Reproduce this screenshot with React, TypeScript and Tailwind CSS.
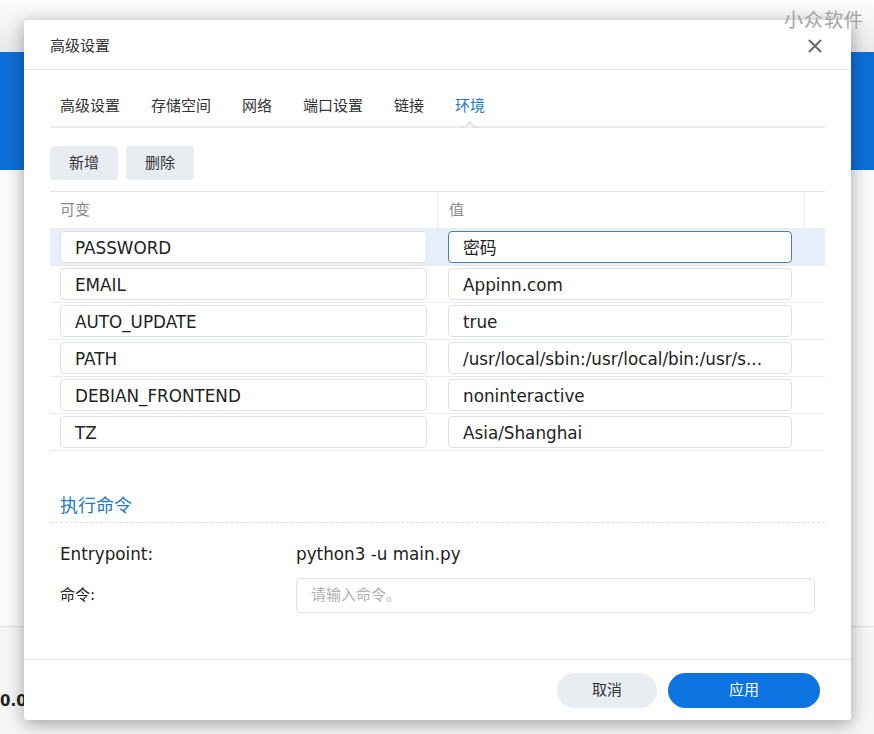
import React from 'react';

const font = { fontFamily: '"DejaVu Sans", "Noto Sans CJK SC", sans-serif' };

const tabs = ['高级设置', '存储空间', '网络', '端口设置', '链接', '环境'];

const envRows = [
  { name: 'PASSWORD', value: '密码' },
  { name: 'EMAIL', value: 'Appinn.com' },
  { name: 'AUTO_UPDATE', value: 'true' },
  { name: 'PATH', value: '/usr/local/sbin:/usr/local/bin:/usr/s...' },
  { name: 'DEBIAN_FRONTEND', value: 'noninteractive' },
  { name: 'TZ', value: 'Asia/Shanghai' },
];

const CloseIcon = () => (
  <svg width="14" height="14" viewBox="0 0 14 14" fill="none">
    <path d="M1.5 1.5L12.5 12.5M12.5 1.5L1.5 12.5" stroke="#6b6b6b" strokeWidth="2" strokeLinecap="round" />
  </svg>
);

const App: React.FC = () => {
  return (
    <div className="relative w-[874px] h-[734px] overflow-hidden bg-[#f9f9f9]" style={font}>
      {/* page behind the dialog */}
      <div className="flex flex-col h-full">
        <div className="h-[52px] bg-gradient-to-b from-[#fdfdfd] to-[#e9e9e9]" />
        <div className="h-[118px] bg-[#0e6fd8]" />
        <div className="h-[457px] bg-[#fafafa] border-b border-[#dedede]" />
        <div className="h-[107px] bg-[#f6f6f6] pt-[62px]">
          <span className="text-[15px] leading-[18px] font-bold text-[#222]">0.0</span>
        </div>
      </div>

      {/* dialog */}
      <div className="absolute left-[24px] top-[20px] w-[827px] h-[700px] bg-white rounded-[3px] shadow-[0_4px_18px_rgba(0,0,0,0.35)] flex flex-col">
        {/* header */}
        <div className="h-[50px] shrink-0 flex items-center justify-between pl-[26px] pr-[29px] pt-[3px] border-b border-[#e6e6e6]">
          <span className="text-[15px] text-[#333]">高级设置</span>
          <CloseIcon />
        </div>

        {/* body */}
        <div className="flex-1 flex flex-col px-[26px]">
          {/* tabs */}
          <div className="h-[58px] shrink-0 flex items-stretch gap-[31px] pl-[10px] border-b-2 border-[#ececec]">
            {tabs.map((t, i) => {
              const active = i === tabs.length - 1;
              return (
                <div key={t} className="relative flex items-center pt-[16px]">
                  <span className={`text-[15px] leading-none ${active ? 'text-[#1a7ad1]' : 'text-[#333]'}`}>{t}</span>
                  {active && (
                    <svg className="absolute left-1/2 -translate-x-1/2 bottom-[-2px]" width="18" height="9" viewBox="0 0 18 9">
                      <path d="M0 8H5.5L9 3L12.5 8H18" fill="white" stroke="#e2e2e2" strokeWidth="2" />
                    </svg>
                  )}
                </div>
              );
            })}
          </div>

          {/* toolbar */}
          <div className="flex gap-[8px] pt-[18px] pb-[11px]">
            <button className="w-[68px] h-[34px] rounded-[4px] bg-[#e8ecf0] text-[15px] text-[#333]">新增</button>
            <button className="w-[68px] h-[34px] rounded-[4px] bg-[#e8ecf0] text-[15px] text-[#333]">删除</button>
          </div>

          {/* env table */}
          <div className="border-t border-[#e3e3e3]">
            <div className="flex h-[37px] text-[15px] text-[#8a8a8a] border-b border-[#ececec]">
              <div className="w-[388px] flex items-center pl-[10px] border-r border-[#ececec]">可变</div>
              <div className="w-[367px] flex items-center pl-[11px] border-r border-[#ececec]">值</div>
              <div className="flex-1" />
            </div>
            {envRows.map((r, i) => (
              <div
                key={r.name}
                className={`flex h-[37px] items-center border-b border-[#ececec] ${i === 0 ? 'bg-[#e7f0fa]' : ''}`}
              >
                <div className="w-[388px] pl-[10px] pr-[11px]">
                  <div className="h-[32px] flex items-center px-[14px] pt-[3px] bg-white border border-[#dde0e4] rounded-[4px] text-[16.8px] text-[#222] whitespace-nowrap">
                    {r.name}
                  </div>
                </div>
                <div className="w-[367px] pl-[10px] pr-[13px]">
                  <div
                    className={`h-[32px] flex items-center pl-[14px] pr-[6px] pt-[3px] bg-white border rounded-[4px] text-[16.8px] text-[#222] whitespace-nowrap ${
                      i === 0 ? 'border-[#4b7fb9]' : 'border-[#dde0e4]'
                    }`}
                  >
                    {r.value}
                  </div>
                </div>
                <div className="flex-1" />
              </div>
            ))}
          </div>

          {/* command section */}
          <div className="mt-[41px] pl-[10px] pb-[3px] border-b border-dashed border-[#dcdcdc]">
            <span className="text-[18px] text-[#1f77c8]">执行命令</span>
          </div>
          <div className="flex items-center h-[26px] mt-[19px] pl-[10px] text-[16.8px] text-[#222]">
            <span className="w-[236px]">Entrypoint:</span>
            <span>python3 -u main.py</span>
          </div>
          <div className="flex items-center mt-[10px] pl-[10px] pr-[10px]">
            <span className="w-[236px] text-[15px] text-[#222]">命令:</span>
            <div className="flex-1 h-[35px] flex items-center px-[14px] border border-[#dfe2e6] rounded-[4px] text-[15px] text-[#b0b0b0]">
              请输入命令。
            </div>
          </div>
        </div>

        {/* footer */}
        <div className="h-[61px] shrink-0 border-t border-[#e6e6e6] flex items-center justify-end gap-[11px] pr-[31px]">
          <button className="w-[100px] h-[35px] rounded-full bg-[#e9edf1] text-[15px] text-[#333]">取消</button>
          <button className="w-[152px] h-[35px] rounded-full bg-[#0b74e0] text-[15px] text-white">应用</button>
        </div>
      </div>

      {/* watermark */}
      <div className="absolute right-[10px] top-[8px] text-[19px] leading-[24px] text-[#a3a3a3] tracking-[1px]">小众软件</div>
    </div>
  );
};

export default App;
